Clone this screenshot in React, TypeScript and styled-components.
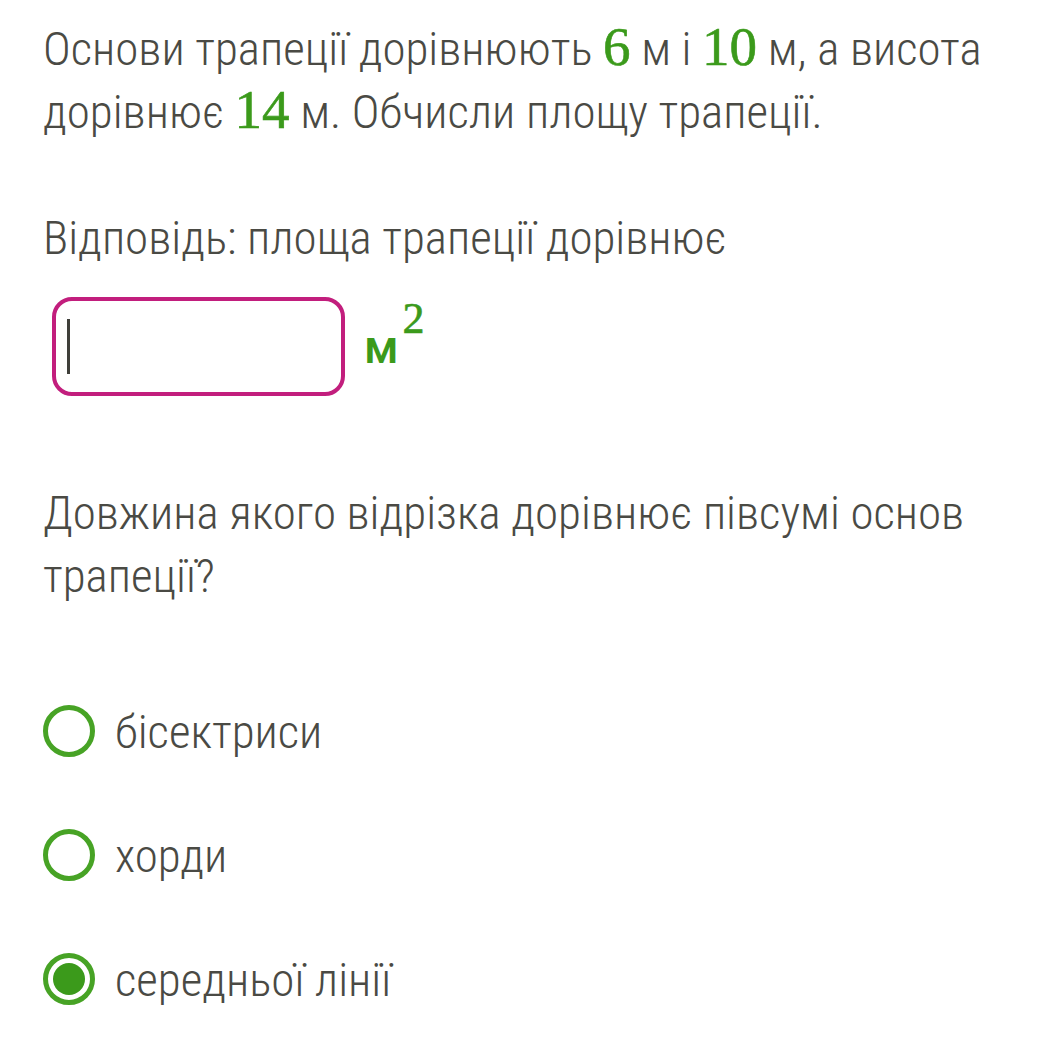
import React from "react";
import styled, { createGlobalStyle } from "styled-components";

const Global = createGlobalStyle`
  html, body { margin: 0; padding: 0; background: #ffffff; }
  body { font-family: "Roboto Condensed", Roboto, "Noto Sans", sans-serif; }
`;

const Page = styled.div`
  padding: 17px 0 40px 43px;
  color: #4a4a44;
  font-family: "Roboto Condensed", Roboto, sans-serif;
  font-weight: 300;
  font-size: 47px;
  line-height: 63px;
`;

const Para = styled.p<{ $mt?: number }>`
  margin: ${(p) => p.$mt ?? 0}px 0 0 0;
`;

const Num = styled.span`
  font-family: "Liberation Serif", "Times New Roman", serif;
  color: #3b9a1b;
  font-size: 55px;
  line-height: 1;
  font-weight: 400;
  -webkit-text-stroke: 0.6px #3b9a1b;
`;

const AnswerRow = styled.div`
  display: flex;
  align-items: flex-start;
  margin: 28px 0 0 9px;
`;

const InputBox = styled.div`
  width: 274px;
  height: 91px;
  border: 4px solid #c21e7d;
  border-radius: 20px;
  display: flex;
  align-items: center;
  padding-left: 11px;
  box-sizing: content-box;
`;

const Caret = styled.div`
  width: 3px;
  height: 55px;
  background: #3f3f3a;
`;

const Unit = styled.div`
  margin-left: 19px;
  color: #3b9a1b;
  display: flex;
  align-items: flex-start;
`;

const UnitLetter = styled.span`
  margin-top: 27px;
  font-family: Roboto, sans-serif;
  font-weight: 500;
  font-size: 46px;
  line-height: 46px;
`;

const Sup = styled.span`
  margin: 0 0 0 4px;
  font-family: "Liberation Serif", "Times New Roman", serif;
  font-size: 44px;
  line-height: 44px;
  -webkit-text-stroke: 0.6px #3b9a1b;
`;

const Options = styled.div`
  margin-top: 98px;
  display: flex;
  flex-direction: column;
  gap: 72px;
`;

const Option = styled.label`
  display: flex;
  align-items: center;
  gap: 20px;
  height: 52px;
`;

const Radio = styled.span<{ $checked?: boolean }>`
  width: 42px;
  height: 42px;
  border: 5px solid #47a325;
  border-radius: 50%;
  display: flex;
  align-items: center;
  justify-content: center;
  flex-shrink: 0;
  &::after {
    content: "";
    display: ${(p) => (p.$checked ? "block" : "none")};
    width: 32px;
    height: 32px;
    border-radius: 50%;
    background: #3b9a1b;
  }
`;

const Label = styled.span`
  line-height: 63px;
`;

const options = [
  { text: "бісектриси", checked: false },
  { text: "хорди", checked: false },
  { text: "середньої лінії", checked: true },
];

export default function App() {
  return (
    <>
      <Global />
      <Page>
        <Para>
          Основи трапеції дорівнюють <Num>6</Num> м і <Num>10</Num> м, а висота
          <br />
          дорівнює <Num>14</Num> м. Обчисли площу трапеції.
        </Para>
        <Para $mt={63}>Відповідь: площа трапеції дорівнює</Para>
        <AnswerRow>
          <InputBox>
            <Caret />
          </InputBox>
          <Unit>
            <UnitLetter>м</UnitLetter>
            <Sup>2</Sup>
          </Unit>
        </AnswerRow>
        <Para $mt={85}>
          Довжина якого відрізка дорівнює півсумі основ
          <br />
          трапеції?
        </Para>
        <Options>
          {options.map((o) => (
            <Option key={o.text}>
              <Radio $checked={o.checked} />
              <Label>{o.text}</Label>
            </Option>
          ))}
        </Options>
      </Page>
    </>
  );
}
